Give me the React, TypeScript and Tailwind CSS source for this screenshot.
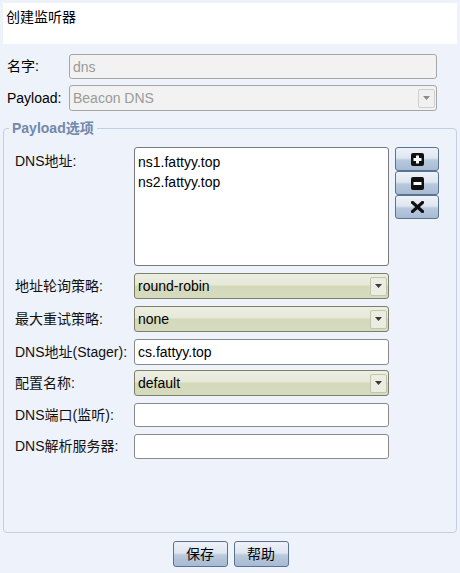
import React from 'react';

const font = "font-['Liberation_Sans','Noto_Sans_CJK_SC',sans-serif]";

const Arrow: React.FC<{ disabled?: boolean }> = ({ disabled }) => (
  <div
    className={
      'mr-[1px] flex h-[19px] w-[17px] items-center justify-center rounded-[2px] border ' +
      (disabled ? 'border-[#cfcfcf] bg-[#f0f0f0]' : 'border-[#c2c5b0] bg-[#ecede2]')
    }
  >
    <svg width="7" height="4" viewBox="0 0 7 4">
      <path d="M0 0h7L3.5 4z" fill={disabled ? '#8a8a8a' : '#3a3a3a'} />
    </svg>
  </div>
);

const Select: React.FC<{ value: string }> = ({ value }) => (
  <div className="flex h-[26px] w-[255px] items-center justify-between rounded-[3px] border border-[#7d8068] bg-[linear-gradient(to_bottom,#eceee2_0%,#e6e9d8_45%,#d4d9bb_50%,#d6dbbf_100%)] pl-[3px]">
    <span className="text-[14px] leading-none text-black">{value}</span>
    <Arrow />
  </div>
);

const TextInput: React.FC<{ value?: string; h?: string }> = ({ value, h = 'h-[26px]' }) => (
  <div className={`${h} flex w-[255px] items-center rounded-[3px] border border-[#8a8a8a] bg-white pl-[3px]`}>
    <span className="text-[14px] leading-none text-black">{value}</span>
  </div>
);

const Row: React.FC<{ label: string; className?: string; children: React.ReactNode }> = ({ label, className, children }) => (
  <div className={`flex items-center ${className ?? ''}`}>
    <div className="w-[119px] text-[14px] text-[#111]">{label}</div>
    {children}
  </div>
);

const IconBtn: React.FC<{ children: React.ReactNode }> = ({ children }) => (
  <div className="flex h-[24px] w-[44px] items-center justify-center rounded-[3px] border border-[#5b7393] bg-[linear-gradient(to_bottom,#eef2f8_0%,#dfe6f0_45%,#b9c9dd_55%,#a7bad3_100%)]">
    {children}
  </div>
);

export default function App() {
  return (
    <div className={`${font} flex h-[573px] w-[460px] flex-col bg-[#eef2fa] text-black`}>
      <div className="mx-[3px] mt-[3px] h-[41px] bg-white pl-[3px] pt-[6px] text-[14px] leading-[16px]">创建监听器</div>

      <div className="mt-[10px] flex items-center pl-[7px]">
        <div className="w-[62px] text-[14px]">名字:</div>
        <div className="flex h-[25px] w-[368px] items-center rounded-[3px] border border-[#a6a6a6] bg-[#f2f2f2] pl-[3px]">
          <span className="text-[14px] leading-none text-[#9a9a9a]">dns</span>
        </div>
      </div>

      <div className="mt-[6px] flex items-center pl-[7px]">
        <div className="w-[62px] text-[14px]">Payload:</div>
        <div className="flex h-[26px] w-[368px] items-center justify-between rounded-[3px] border border-[#a6a6a6] bg-[#f2f2f2] pl-[3px]">
          <span className="text-[14px] leading-none text-[#9a9a9a]">Beacon DNS</span>
          <Arrow disabled />
        </div>
      </div>

      <div className="relative mx-[3px] mt-[17px] h-[405px] rounded-[4px] border border-[#c3cfe0] pl-[11px] pt-[18px]">
        <div className="absolute -top-[9px] left-[5px] bg-[#eef2fa] px-[3px] text-[14px] font-bold leading-[16px] text-[#7189ab]">
          Payload选项
        </div>

        <div className="flex items-start">
          <div className="w-[119px] pt-[6px] text-[14px] leading-[16px] text-[#111]">DNS地址:</div>
          <div className="h-[119px] w-[255px] rounded-[3px] border border-[#7a7a7a] bg-white pl-[3px] pt-[4px] text-[14px] leading-[20px]">
            <div>ns1.fattyy.top</div>
            <div>ns2.fattyy.top</div>
          </div>
          <div className="ml-[6px] flex flex-col">
            <IconBtn>
              <svg width="13" height="13" viewBox="0 0 13 13">
                <rect width="13" height="13" rx="2" fill="#111" />
                <path d="M5 2.5h3v2.5h2.5v3H8v2.5H5V8H2.5V5H5z" fill="#fff" />
              </svg>
            </IconBtn>
            <IconBtn>
              <svg width="13" height="13" viewBox="0 0 13 13">
                <rect width="13" height="13" rx="2" fill="#111" />
                <rect x="2.5" y="5" width="8" height="3" fill="#fff" />
              </svg>
            </IconBtn>
            <IconBtn>
              <svg width="13" height="12" viewBox="0 0 13 12">
                <path d="M1.5 1.5l10 9M11.5 1.5l-10 9" stroke="#111" strokeWidth="3.2" strokeLinecap="square" />
              </svg>
            </IconBtn>
          </div>
        </div>

        <Row label="地址轮询策略:" className="mt-[7px]">
          <Select value="round-robin" />
        </Row>
        <Row label="最大重试策略:" className="mt-[7px]">
          <Select value="none" />
        </Row>
        <Row label="DNS地址(Stager):" className="mt-[7px]">
          <TextInput value="cs.fattyy.top" />
        </Row>
        <Row label="配置名称:" className="mt-[5px]">
          <Select value="default" />
        </Row>
        <Row label="DNS端口(监听):" className="mt-[7px]">
          <TextInput h="h-[24px]" />
        </Row>
        <Row label="DNS解析服务器:" className="mt-[7px]">
          <TextInput h="h-[25px]" />
        </Row>
      </div>

      <div className="mt-[8px] flex justify-center gap-[6px] pl-[1px]">
        {['保存', '帮助'].map((t) => (
          <div
            key={t}
            className="flex h-[26px] w-[55px] items-center justify-center rounded-[3px] border border-[#5b7393] bg-[linear-gradient(to_bottom,#eef2f8_0%,#dfe6f0_45%,#b9c9dd_55%,#a7bad3_100%)] text-[14px] leading-none"
          >
            {t}
          </div>
        ))}
      </div>
    </div>
  );
}
